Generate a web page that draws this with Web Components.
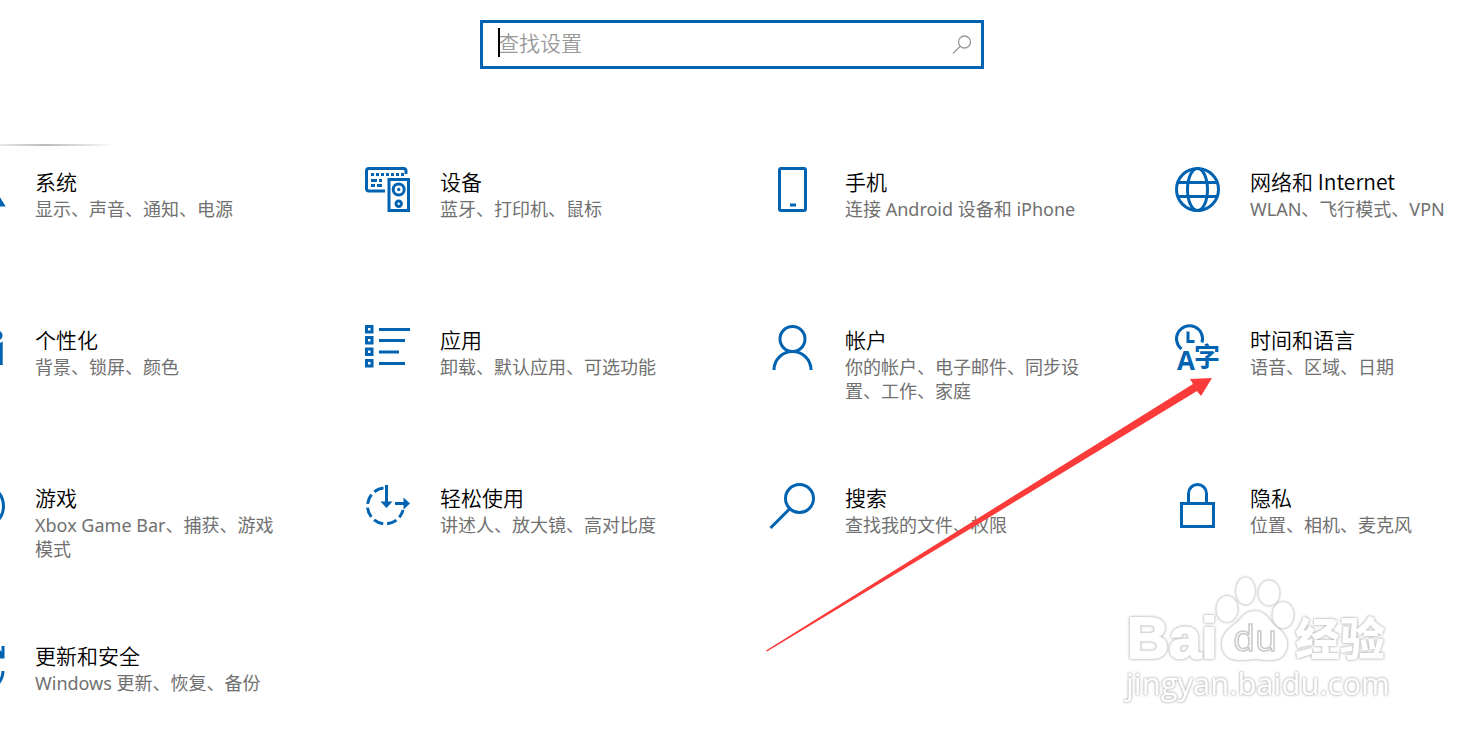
<!DOCTYPE html>
<html lang="zh-CN">
<head>
<meta charset="utf-8">
<title>设置</title>
<style>
  body {
    margin: 0;
    background: #fff;
    font-family: "Noto Sans", "Noto Sans CJK SC", sans-serif;
  }
</style>
</head>
<body>
<settings-page>
  <settings-search slot="search" placeholder="查找设置"></settings-search>
  <settings-tile icon="system" title-text="系统">显示、声音、通知、电源</settings-tile>
  <settings-tile icon="devices" title-text="设备">蓝牙、打印机、鼠标</settings-tile>
  <settings-tile icon="phone" title-text="手机">连接 Android 设备和 iPhone</settings-tile>
  <settings-tile icon="network" title-text="网络和 Internet">WLAN、飞行模式、VPN</settings-tile>
  <settings-tile icon="personal" title-text="个性化">背景、锁屏、颜色</settings-tile>
  <settings-tile icon="apps" title-text="应用">卸载、默认应用、可选功能</settings-tile>
  <settings-tile icon="account" title-text="帐户">你的帐户、电子邮件、同步设置、工作、家庭</settings-tile>
  <settings-tile icon="time" title-text="时间和语言">语音、区域、日期</settings-tile>
  <settings-tile icon="gaming" title-text="游戏">Xbox Game Bar、捕获、游戏模式</settings-tile>
  <settings-tile icon="ease" title-text="轻松使用">讲述人、放大镜、高对比度</settings-tile>
  <settings-tile icon="search" title-text="搜索">查找我的文件、权限</settings-tile>
  <settings-tile icon="privacy" title-text="隐私">位置、相机、麦克风</settings-tile>
  <settings-tile icon="update" title-text="更新和安全">Windows 更新、恢复、备份</settings-tile>
  <site-watermark slot="overlay"></site-watermark>
  <pointer-arrow slot="overlay"></pointer-arrow>
</settings-page>

<script>
const ICONS = {
  system: '<path d="M7 9h31v19H7zM7 28 2 38h41l-5-8"/>',
  devices: `
    <path d="M20 24H4q-2.500 0-2.500-2.500V4Q1.500 1.500 4 1.500h34.500q2.500 0 2.500 2.500v3"/>
    <path d="M6 7.500h33" stroke-dasharray="3 2"/>
    <path d="M6 13.500h6m2 0h3M6 18.500h4m2 0h5"/>
    <path d="M24 12.500h19.500v31H24z"/>
    <circle cx="33.700" cy="22.500" r="5.500"/><circle cx="33.700" cy="22.500" r="1.700" fill="#0063b1" stroke="none"/>
    <circle cx="33.700" cy="36.700" r="2.700"/>`,
  phone: '<rect x="9.500" y="1.500" width="26" height="42" rx="1.500"/><path d="M20 38h6"/>',
  network: '<circle cx="22.500" cy="22.500" r="21"/><ellipse cx="22.500" cy="22.500" rx="10" ry="21"/><path d="M3 15.500h39M3 29.500h39"/>',
  personal: '<path d="M36 16H3v23h33"/><circle cx="37.500" cy="10.500" r="5" fill="#0063b1" stroke="none"/><path d="M36 19q3 0 6.700-2.500V40H36z" fill="#0063b1" stroke="none"/>',
  apps: `
    <path d="M1.500 1.500h5.500v5.500H1.500zM1.500 12.500h5.500v5.500H1.500zM1.500 24h5.500v5.500H1.500zM1.500 35.500h5.500v5.500H1.500z"/>
    <path d="M14 4.500h31M14 15.500h26M14 27h20M14 38.500h26"/>`,
  account: '<circle cx="22.500" cy="14" r="12.500"/><path d="M4 45a18.500 18.500 0 0 1 37 0"/>',
  time: `
    <path d="M6.500 24A13 13 0 1 1 27 17.500"/>
    <path d="M13 6.500v10h6.500"/>
    <text x="2" y="45" font-size="26" font-weight="700" font-family="Open Sans">A</text>
    <text x="19" y="41" font-size="26" font-weight="600" font-family="Noto Sans CJK SC">字</text>`,
  gaming: '<circle cx="22" cy="23" r="21.500"/><path d="M8 38q4-12 14-21 10 9 14 21M10 7q6 0 12 6 6-6 12-6"/>',
  ease: `
    <path d="M18.500 5A18 18 0 1 0 38 27" stroke-dasharray="10 4"/>
    <path d="M21.500 2v20M30 20.500h10"/>
    <path d="M15.500 18.500h12l-6 6.500zM38.500 14.500v12l6.500-6z" fill="#0063b1" stroke="none"/>`,
  search: '<circle cx="29.500" cy="15.500" r="14"/><path d="M19.500 26 .500 45"/>',
  privacy: '<path d="M6.500 20.500h32v23h-32zM13.500 20v-9.500a9 9 0 0 1 18 0V20"/>',
  update: '<path d="M43 5v11H32M42 16A20 20 0 0 0 3 20M2 40V29h11M3 29a20 20 0 0 0 40 1"/>'
};

class SettingsPage extends HTMLElement {
  constructor() {
    super();
    this.attachShadow({ mode: 'open' }).innerHTML = `
      <style>
        :host { display: block; position: relative; min-height: 100vh; overflow: hidden; }
        header { display: flex; justify-content: center; padding: 20px 5px 75px 0; }
        .rule { height: 2px; width: 116px; background: linear-gradient(90deg, #e6e6e6, #bcbcbc 40%, #fff); }
        /* the outer columns run past both edges of the window */
        main {
          display: grid;
          grid-template-columns: repeat(4, 1fr);
          grid-template-rows: repeat(3, 158px) auto;
          margin: 21px -111px 0 -40px;
        }
      </style>
      <header><slot name="search"></slot></header>
      <div class="rule"></div>
      <main><slot></slot></main>
      <slot name="overlay"></slot>
    `;
  }
}

class SettingsSearch extends HTMLElement {
  connectedCallback() {
    const label = this.getAttribute('placeholder') || '';
    this.attachShadow({ mode: 'open' }).innerHTML = `
      <style>
        :host { display: block; width: 504px; }
        .box {
          position: relative;
          display: flex;
          align-items: center;
          box-sizing: border-box;
          height: 49px;
          padding: 0 9px 0 15px;
          border: 3px solid #0063b1;
        }
        input {
          flex: 1;
          min-width: 0;
          padding: 0 0 3px;
          border: 0;
          outline: 0;
          background: none;
          font: 350 21px/30px "Open Sans", "Noto Sans CJK SC", sans-serif;
        }
        input::placeholder { color: #999; opacity: 1; }
        .caret { position: absolute; left: 15px; top: 5px; width: 2px; height: 29px; background: #000; }
        svg { width: 20px; height: 20px; fill: none; stroke: #999; stroke-width: 1.300; }
      </style>
      <div class="box">
        <input type="text" aria-label="${label}" placeholder="${label}">
        <span class="caret"></span>
        <svg viewBox="0 0 20 20" aria-hidden="true"><circle cx="12.500" cy="7" r="6"/><path d="M8.300 11.200 1 18.500"/></svg>
      </div>
    `;
  }
}

class SettingsTile extends HTMLElement {
  connectedCallback() {
    const icon = ICONS[this.getAttribute('icon')] || '';
    this.attachShadow({ mode: 'open' }).innerHTML = `
      <style>
        :host { display: block; }
        a {
          display: grid;
          grid-template-columns: 46px 1fr;
          gap: 29px;
          padding-right: 81px;
          color: #000;
          text-decoration: none;
        }
        svg { width: 46px; height: 46px; fill: none; stroke: #0063b1; stroke-width: 3; overflow: visible; }
        svg text { fill: #0063b1; stroke: none; }
        h2 { margin: 0 0 2px; font: 350 21px/28px "Noto Sans CJK SC", sans-serif; }
        p { margin: 0; font-size: 18px; line-height: 24px; font-weight: 400; color: #707070; }
      </style>
      <a href="#">
        <svg viewBox="0 0 46 46" aria-hidden="true">${icon}</svg>
        <div>
          <h2>${this.getAttribute('title-text') || ''}</h2>
          <p><slot></slot></p>
        </div>
      </a>
    `;
  }
}

class SiteWatermark extends HTMLElement {
  constructor() {
    super();
    this.attachShadow({ mode: 'open' }).innerHTML = `
      <style>
        :host {
          position: absolute;
          right: 79px;
          top: 574px;
          width: 264px;
          color: #fff;
          pointer-events: none;
          filter: drop-shadow(0 0 1px #bbb) drop-shadow(0 0 1px #ccc);
        }
        svg { display: block; width: 264px; height: 92px; overflow: visible; }
        .brand { font: 700 58px "Liberation Sans", sans-serif; stroke: #fff; stroke-width: 2; }
        .du { font: 36px "Open Sans", sans-serif; fill: #fff; stroke: #c8c8c8; stroke-width: 1.500; }
        .cn { font: 900 45px "Noto Sans CJK SC", sans-serif; }
        p { margin: 0; font: 500 31px/34px "Open Sans", sans-serif; }
      </style>
      <svg viewBox="0 0 264 92" fill="#fff">
        <text class="brand" x="1" y="84">Bai</text>
        <ellipse cx="101" cy="35" rx="10.500" ry="13"/>
        <ellipse cx="119.500" cy="17" rx="9.500" ry="13.500"/>
        <ellipse cx="143" cy="19" rx="10.500" ry="12.500"/>
        <ellipse cx="157" cy="41" rx="10.500" ry="13"/>
        <path d="M129 37q8 0 14 8 4 6 11 11 8 7 7 16-2 14-16 14-8 0-16-1-8 1-15 1-17 0-18-15-1-9 8-17 8-6 11-10 6-7 14-7z"/>
        <text class="du" x="107" y="77">du</text>
        <text class="cn" x="169" y="82">经验</text>
      </svg>
      <p>jingyan.baidu.com</p>
    `;
  }
}

class PointerArrow extends HTMLElement {
  constructor() {
    super();
    this.attachShadow({ mode: 'open' }).innerHTML = `
      <style>
        :host { position: absolute; left: 766px; top: 377px; pointer-events: none; }
        svg { display: block; width: 447px; height: 275px; fill: #fb3a3a; }
      </style>
      <svg viewBox="0 0 447 275" aria-hidden="true">
        <path d="M446 1 424 2l3 5L206 145 0 273.500l1 1L209 149 431 14l4 5z"/>
      </svg>
    `;
  }
}

customElements.define('settings-page', SettingsPage);
customElements.define('settings-search', SettingsSearch);
customElements.define('settings-tile', SettingsTile);
customElements.define('site-watermark', SiteWatermark);
customElements.define('pointer-arrow', PointerArrow);
</script>
</body>
</html>
